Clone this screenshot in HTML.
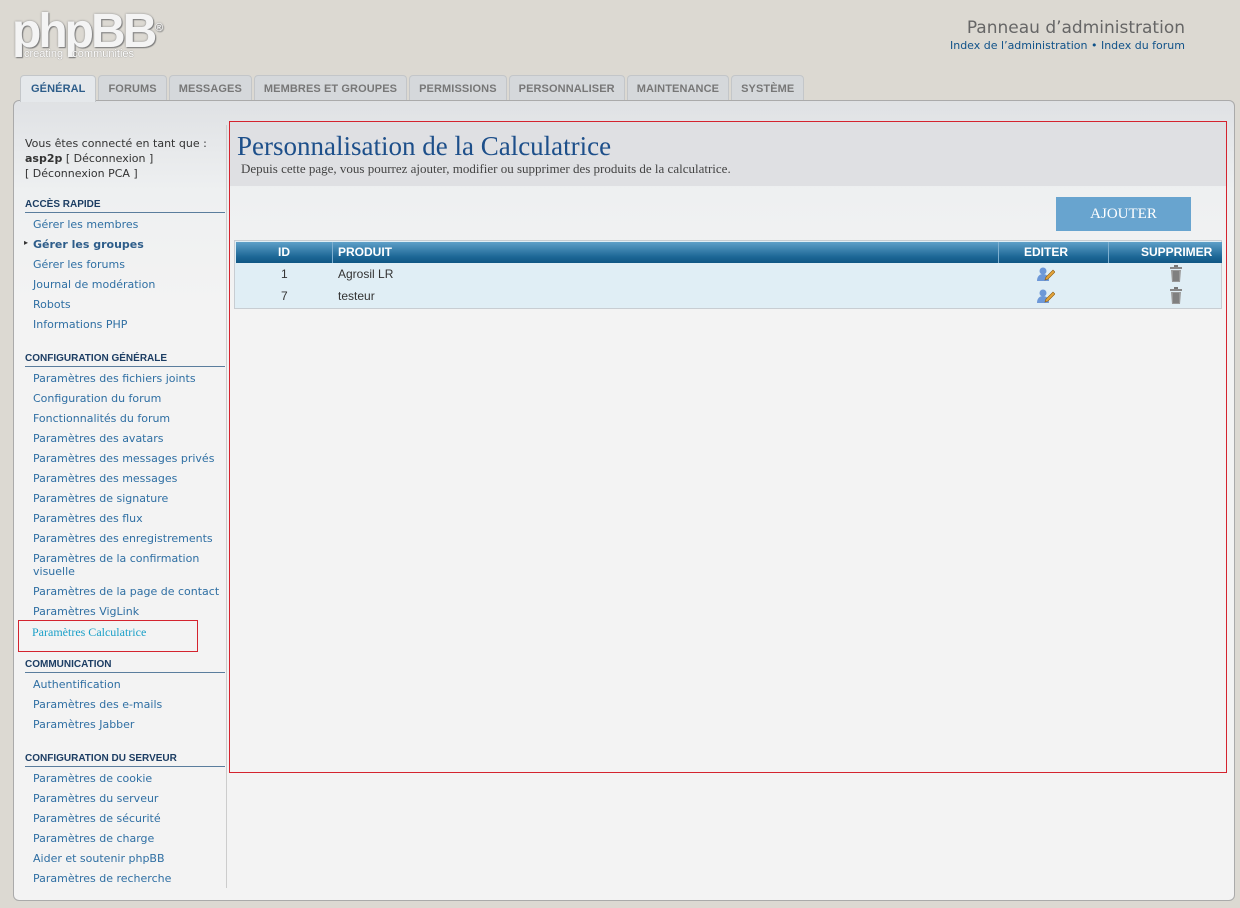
<!DOCTYPE html>
<html><head><meta charset="utf-8"><style>
*{margin:0;padding:0;box-sizing:border-box}
body{width:1240px;height:908px;background:#dcd9d2;font-family:Verdana,"DejaVu Sans",sans-serif;position:relative;overflow:hidden}
.a{position:absolute}
.logo{left:12px;top:8px;font:bold 48px "Liberation Sans",sans-serif;color:#f4f4f4;letter-spacing:-3px;text-shadow:0 0 2px #888,1px 1px 1px #777;line-height:48px}
.logo small{position:absolute;left:12px;top:40px;font:11px "Liberation Sans",sans-serif;letter-spacing:0;color:#fff;text-shadow:0 0 1px #666}
.logo sup{font-size:11px;position:absolute;left:143px;top:-4px;letter-spacing:0}
.hd{right:55px;top:18px;font:17px "DejaVu Sans",sans-serif;color:#666;text-align:right}
.hd2{right:55px;top:39px;font:11px "DejaVu Sans",sans-serif;color:#105289;text-align:right}
.tabs{left:20px;top:75px;height:26px;display:flex;gap:2px}
.tab{height:25px;padding:0 9px;background:#d5d8db;border:1px solid #c3c6c9;border-bottom:none;border-radius:4px 4px 0 0;font:bold 11px "Liberation Sans",sans-serif;color:#777;line-height:26px;letter-spacing:.1px}
.tab.on{background:#e5e8eb;color:#2d5d8a;height:27px;padding:0 10px}
.panel{left:13px;top:100px;width:1222px;height:801px;border:1px solid #aaa;border-radius:6px;background:linear-gradient(#dfe1e4 0,#eef0f1 90px,#f3f3f3 200px,#f3f3f3)}
.side{left:226px;top:125px;width:1px;height:763px;background:#ccc}
.menu{left:25px;font:11px "DejaVu Sans",sans-serif;color:#333}
.sec{left:25px;width:200px;font:bold 10px "Liberation Sans",sans-serif;color:#1c3d63;border-bottom:1px solid #5a7d9d;padding-bottom:2px}
.li{left:33px;font:11px "DejaVu Sans",sans-serif;color:#2f6fa3;white-space:nowrap}
.main{left:229px;top:121px;width:998px;height:652px;border:1px solid #d4232e}
.mhead{left:230px;top:122px;width:996px;height:64px;background:#dfe0e3}
h1{left:237px;top:131px;font:27px "Liberation Serif",serif;color:#1d4f8a;font-weight:normal}
.desc{left:241px;top:161px;font:13px "Liberation Serif",serif;color:#444}
.btn{left:1056px;top:197px;width:135px;height:34px;background:#68a4cf;color:#fff;font:15px "Liberation Serif",serif;text-align:center;line-height:34px}
.tbl{left:234px;top:240px;width:988px;height:69px;border:1px solid #c8cdd2;background:#e0eef5}
.th{left:236px;top:242px;width:986px;height:21px;background:linear-gradient(#5ea0c8,#1d6796 70%,#0f5683);color:#fff;font:bold 12px "Liberation Sans",sans-serif;line-height:21px}
.td{font:12px "Liberation Sans",sans-serif;color:#333}
</style></head><body>
<div class="a logo">phpBB<sup>®</sup><small>creating &nbsp; communities</small></div>
<div class="a hd">Panneau d’administration</div>
<div class="a hd2">Index de l’administration • Index du forum</div>
<div class="a panel"></div>
<div class="a tabs"><div class="tab on">GÉNÉRAL</div><div class="tab">FORUMS</div><div class="tab">MESSAGES</div><div class="tab">MEMBRES ET GROUPES</div><div class="tab">PERMISSIONS</div><div class="tab">PERSONNALISER</div><div class="tab">MAINTENANCE</div><div class="tab">SYSTÈME</div></div>
<div class="a side"></div>
<div class="a menu" style="top:136px;line-height:15px">Vous êtes connecté en tant que :<br><b>asp2p</b> [ Déconnexion ]<br>[ Déconnexion PCA ]</div>
<div class="a sec" style="top:199px">ACCÈS RAPIDE</div>
<div class="a li" style="top:218px">Gérer les membres</div>
<div class="a li" style="top:238px;font-weight:bold;color:#2d5d8a"><span style="position:absolute;left:-9px;font-size:8px;color:#333">▸</span>Gérer les groupes</div>
<div class="a li" style="top:258px">Gérer les forums</div>
<div class="a li" style="top:278px">Journal de modération</div>
<div class="a li" style="top:298px">Robots</div>
<div class="a li" style="top:318px">Informations PHP</div>
<div class="a sec" style="top:353px">CONFIGURATION GÉNÉRALE</div>
<div class="a li" style="top:372px">Paramètres des fichiers joints</div>
<div class="a li" style="top:392px">Configuration du forum</div>
<div class="a li" style="top:412px">Fonctionnalités du forum</div>
<div class="a li" style="top:432px">Paramètres des avatars</div>
<div class="a li" style="top:452px">Paramètres des messages privés</div>
<div class="a li" style="top:472px">Paramètres des messages</div>
<div class="a li" style="top:492px">Paramètres de signature</div>
<div class="a li" style="top:512px">Paramètres des flux</div>
<div class="a li" style="top:532px">Paramètres des enregistrements</div>
<div class="a li" style="top:552px;line-height:13px">Paramètres de la confirmation<br>visuelle</div>
<div class="a li" style="top:585px">Paramètres de la page de contact</div>
<div class="a li" style="top:605px">Paramètres VigLink</div>
<div class="a" style="left:18px;top:620px;width:180px;height:32px;border:1px solid #d4232e"></div>
<div class="a li" style="left:32px;top:625px;font:12px 'Liberation Serif',serif;color:#1ba0c8">Paramètres Calculatrice</div>
<div class="a sec" style="top:659px">COMMUNICATION</div>
<div class="a li" style="top:678px">Authentification</div>
<div class="a li" style="top:698px">Paramètres des e-mails</div>
<div class="a li" style="top:718px">Paramètres Jabber</div>
<div class="a sec" style="top:753px">CONFIGURATION DU SERVEUR</div>
<div class="a li" style="top:772px">Paramètres de cookie</div>
<div class="a li" style="top:792px">Paramètres du serveur</div>
<div class="a li" style="top:812px">Paramètres de sécurité</div>
<div class="a li" style="top:832px">Paramètres de charge</div>
<div class="a li" style="top:852px">Aider et soutenir phpBB</div>
<div class="a li" style="top:872px">Paramètres de recherche</div>
<div class="a mhead"></div>
<div class="a main"></div>
<h1 class="a">Personnalisation de la Calculatrice</h1>
<div class="a desc">Depuis cette page, vous pourrez ajouter, modifier ou supprimer des produits de la calculatrice.</div>
<div class="a btn">AJOUTER</div>
<div class="a tbl"></div>
<div class="a th">
<span class="a" style="left:42px">ID</span>
<span class="a" style="left:96px;top:0;width:1px;height:21px;background:#7fb0d0"></span>
<span class="a" style="left:102px">PRODUIT</span>
<span class="a" style="left:762px;width:1px;height:21px;background:#7fb0d0"></span>
<span class="a" style="left:788px">EDITER</span>
<span class="a" style="left:872px;width:1px;height:21px;background:#7fb0d0"></span>
<span class="a" style="left:905px">SUPPRIMER</span>
</div>
<div class="a td" style="left:281px;top:267px">1</div>
<div class="a td" style="left:338px;top:267px">Agrosil LR</div>
<div class="a td" style="left:281px;top:289px">7</div>
<div class="a td" style="left:338px;top:289px">testeur</div>
<svg class="a" style="left:1037px;top:266px" width="18" height="16"><circle cx="6" cy="5" r="3.5" fill="#6d98d8"/><path d="M0 15c0-5 3-7 6-7s6 2 6 7z" fill="#6d98d8"/><path d="M8 14l1-3 7-7 2 2-7 7z" fill="#e3a43a" stroke="#8a5a10" stroke-width=".6"/></svg>
<svg class="a" style="left:1037px;top:288px" width="18" height="16"><circle cx="6" cy="5" r="3.5" fill="#6d98d8"/><path d="M0 15c0-5 3-7 6-7s6 2 6 7z" fill="#6d98d8"/><path d="M8 14l1-3 7-7 2 2-7 7z" fill="#e3a43a" stroke="#8a5a10" stroke-width=".6"/></svg>
<svg class="a" style="left:1169px;top:265px" width="14" height="17"><rect x="5" y="0" width="4" height="2" fill="#777"/><rect x="1" y="2" width="12" height="2" fill="#888"/><path d="M2 5h10l-1 12H3z" fill="#999"/><path d="M5 6v10M7 6v10M9 6v10" stroke="#666"/></svg>
<svg class="a" style="left:1169px;top:287px" width="14" height="17"><rect x="5" y="0" width="4" height="2" fill="#777"/><rect x="1" y="2" width="12" height="2" fill="#888"/><path d="M2 5h10l-1 12H3z" fill="#999"/><path d="M5 6v10M7 6v10M9 6v10" stroke="#666"/></svg>
</body></html>
